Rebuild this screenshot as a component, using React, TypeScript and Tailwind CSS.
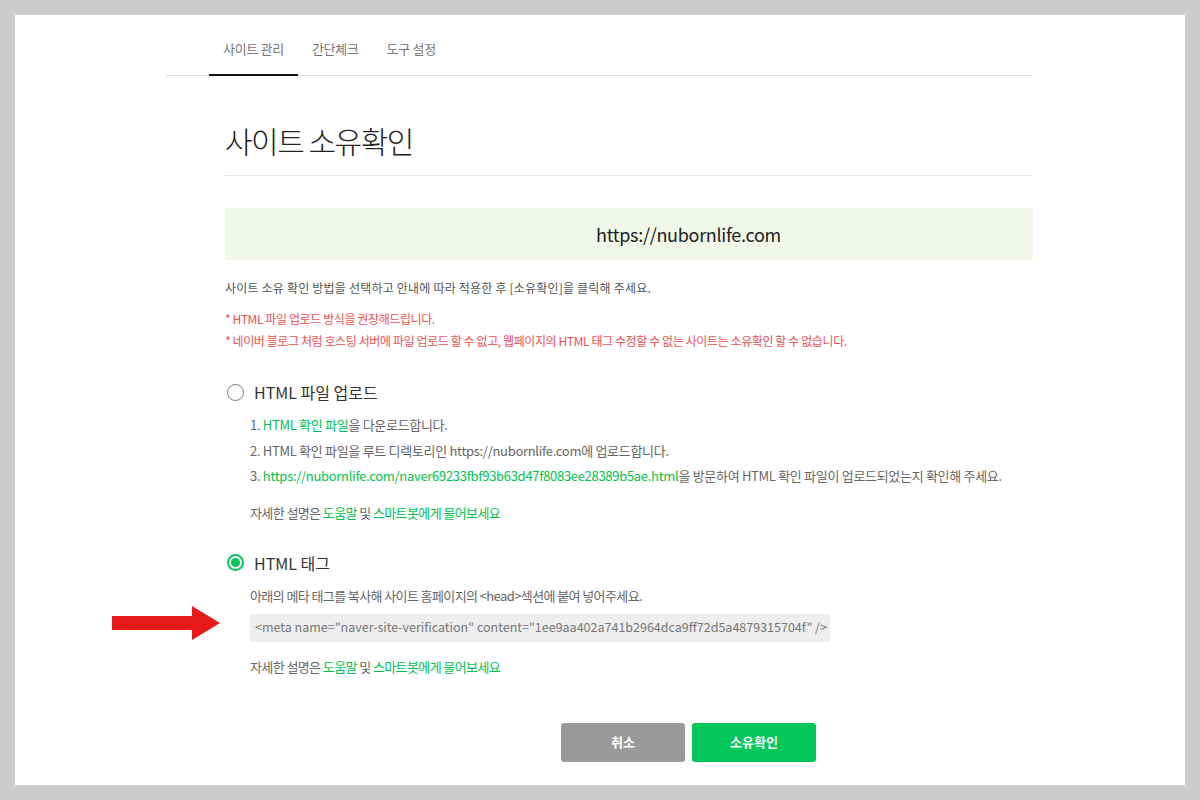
import React from "react";

const font = { fontFamily: '"Noto Sans CJK KR", "Noto Sans", sans-serif' };

function Radio({ checked }: { checked: boolean }) {
  return checked ? (
    <span className="ml-[2px] w-[17px] h-[17px] rounded-full border-[2px] border-[#03c75a] flex items-center justify-center">
      <span className="w-[9px] h-[9px] rounded-full bg-[#03c75a]" />
    </span>
  ) : (
    <span className="ml-[2px] w-[17px] h-[17px] rounded-full border-[1.5px] border-[#777]" />
  );
}

function Help() {
  return (
    <p className="text-[13px] leading-[25px] tracking-[-0.6px] text-[#666]">
      자세한 설명은 <span className="text-[#00c34d]">도움말</span> 및{" "}
      <span className="text-[#00c34d]">스마트봇에게 물어보세요</span>
    </p>
  );
}

export default function App() {
  return (
    <div style={font} className="w-[1200px] h-[800px] bg-[#cccccc] p-[15px]">
      <div className="relative h-[770px] bg-white overflow-hidden">
        {/* nav */}
        <div className="ml-[151px] w-[867px] h-[61px] border-b border-[#dddddd] flex pl-[43px]">
          <div className="h-[61px] px-[14px] pt-[25px] border-b-2 border-[#111] -mb-px text-[13px] leading-[18px] tracking-[-0.3px] text-[#777]">
            사이트 관리
          </div>
          <div className="h-[61px] px-[14px] pt-[25px] text-[13px] leading-[18px] tracking-[-0.3px] text-[#777]">
            간단체크
          </div>
          <div className="h-[61px] px-[14px] pt-[25px] text-[13px] leading-[18px] tracking-[-0.3px] text-[#777]">
            도구 설정
          </div>
        </div>

        <div className="ml-[210px] w-[808px]">
          <div className="mt-[46px] pb-[17px] border-b border-[#e5e5e5]">
            <h1 className="text-[30px] leading-[36px] font-light text-[#222] tracking-[-1.5px]">
              사이트 소유확인
            </h1>
          </div>

          <div className="mt-[32px] h-[52px] bg-[#f1f8e9] flex items-center pl-[371px]">
            <span className="text-[18px] tracking-[-0.3px] text-[#222]">https://nubornlife.com</span>
          </div>

          <p className="mt-[19px] text-[12px] leading-[18px] tracking-[0.2px] text-[#555]">
            사이트 소유 확인 방법을 선택하고 안내에 따라 적용한 후 [소유확인]을 클릭해 주세요.
          </p>
          <div className="mt-[11px] text-[12px] leading-[22px] tracking-[-0.4px] text-[#f0504f]">
            <p>* HTML 파일 업로드 방식을 권장해드립니다.</p>
            <p>* 네이버 블로그 처럼 호스팅 서버에 파일 업로드 할 수 없고, 웹페이지의 HTML 태그 수정할 수 없는 사이트는 소유확인 할 수 없습니다.</p>
          </div>

          {/* option 1 */}
          <div className="mt-[28px] flex items-center h-[24px]">
            <Radio checked={false} />
            <span className="ml-[10px] text-[16px] text-[#333]">HTML 파일 업로드</span>
          </div>
          <div className="ml-[25px] mt-[8px] text-[13px] leading-[25.5px] tracking-[-0.3px] text-[#666]">
            <p>
              1. <span className="text-[#00c34d]">HTML 확인 파일</span>을 다운로드합니다.
            </p>
            <p>2. HTML 확인 파일을 루트 디렉토리인 https://nubornlife.com에 업로드합니다.</p>
            <p>
              3.{" "}
              <span className="text-[#00c34d]">
                https://nubornlife.com/naver69233fbf93b63d47f8083ee28389b5ae.html
              </span>
              을 방문하여 HTML 확인 파일이 업로드되었는지 확인해 주세요.
            </p>
            <div className="mt-[11px]">
              <Help />
            </div>
          </div>

          {/* option 2 */}
          <div className="mt-[26px] flex items-center h-[24px]">
            <Radio checked={true} />
            <span className="ml-[10px] text-[16px] text-[#333]">HTML 태그</span>
          </div>
          <div className="ml-[25px] mt-[8px]">
            <p className="text-[13px] leading-[25px] tracking-[-0.6px] text-[#666]">
              아래의 메타 태그를 복사해 사이트 홈페이지의 &lt;head&gt;섹션에 붙여 넣어주세요.
            </p>
            <div className="mt-[6px] w-[580px] h-[28px] bg-[#eeeeee] flex items-center pl-[5px] text-[12.5px] tracking-[0px] text-[#777]">
              &lt;meta name="naver-site-verification" content="1ee9aa402a741b2964dca9ff72d5a4879315704f" /&gt;
            </div>
            <div className="mt-[12px]">
              <Help />
            </div>
          </div>

          {/* buttons */}
          <div className="mt-[44px] ml-[336px] flex gap-[7px]">
            <button className="w-[124px] h-[39px] rounded-[3px] bg-[#999999] text-white text-[13px] font-bold">
              취소
            </button>
            <button className="w-[124px] h-[39px] rounded-[3px] bg-[#03c75a] text-white text-[13px] font-bold">
              소유확인
            </button>
          </div>
        </div>

        {/* red arrow */}
        <svg
          className="absolute left-[97px] top-[591px]"
          width="110"
          height="36"
          viewBox="0 0 110 36"
        >
          <polygon points="0,10 80,10 80,0 108,17 80,34 80,24 0,24" fill="#e8191a" />
        </svg>
      </div>
    </div>
  );
}
